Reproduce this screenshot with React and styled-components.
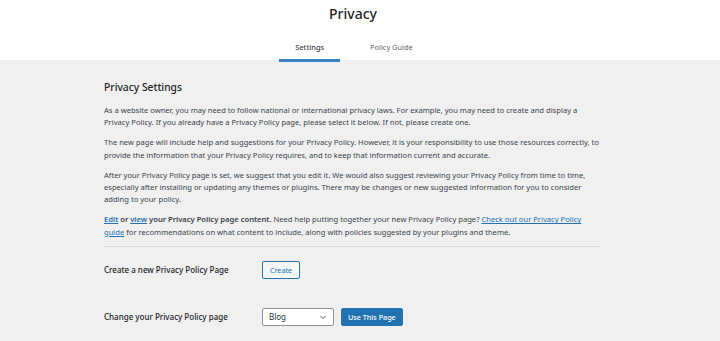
import styled, { createGlobalStyle } from "styled-components"

const GlobalStyle = createGlobalStyle`
  body {
    margin: 0;
    background: #f0f0f1;
    font-family: "Noto Sans", "Open Sans", sans-serif;
    color: #3c434a;
  }
`

const App = () => {
  return (
    <Page>
      <GlobalStyle />
      <Header>
        <Title>Privacy</Title>
        <Tabs>
          <Tab active>Settings</Tab>
          <Tab>Policy Guide</Tab>
        </Tabs>
      </Header>
      <Content>
        <Heading>Privacy Settings</Heading>
        <Para>
          As a website owner, you may need to follow national or international privacy laws. For example, you may
          need to create and display a Privacy Policy. If you already have a Privacy Policy page, please select it
          below. If not, please create one.
        </Para>
        <Para>
          The new page will include help and suggestions for your Privacy Policy. However, it is your responsibility
          to use those resources correctly, to provide the information that your Privacy Policy requires, and to keep
          that information current and accurate.
        </Para>
        <Para>
          After your Privacy Policy page is set, we suggest that you edit it. We would also suggest reviewing your
          Privacy Policy from time to time, especially after installing or updating any themes or plugins. There may
          be changes or new suggested information for you to consider adding to your policy.
        </Para>
        <Para>
          <Link href="#" bold>Edit</Link>
          <Strong> or </Strong>
          <Link href="#" bold>view</Link>
          <Strong> your Privacy Policy page content.</Strong> Need help putting together your new Privacy Policy
          page? <Link href="#">Check out our Privacy Policy guide</Link> for recommendations on what content to
          include, along with policies suggested by your plugins and theme.
        </Para>
        <Rule />
        <Row>
          <Label>Create a new Privacy Policy Page</Label>
          <Button>Create</Button>
        </Row>
        <Row>
          <Label>Change your Privacy Policy page</Label>
          <Select>
            <span>Blog</span>
            <svg width="8" height="8" viewBox="0 0 16 16" fill="none">
              <path d="M3 6l5 5 5-5" stroke="#50575e" strokeWidth="2" strokeLinecap="round" strokeLinejoin="round" />
            </svg>
          </Select>
          <Button primary>Use This Page</Button>
        </Row>
      </Content>
    </Page>
  )
}
export default App

//styling

const Page = styled.div`
  min-height: 341px;
`
const Header = styled.div`
  background: #fff;
  height: 60px;
  display: flex;
  flex-direction: column;
  align-items: center;
  padding-right: 14px;
  box-sizing: border-box;
`
const Title = styled.h1`
  margin: 4px 0 0;
  font-size: 14px;
  line-height: 20px;
  font-weight: 500;
  color: #1d2327;
`
const Tabs = styled.div`
  display: flex;
  gap: 14px;
  margin-top: 13px;
  padding-left: 2px;
`
const Tab = styled.div`
  padding: 0 16px 2px;
  height: 20px;
  display: flex;
  align-items: center;
  font-size: 7.4px;
  font-weight: ${p => (p.active ? 500 : 400)};
  color: ${p => (p.active ? "#3c434a" : "#646970")};
  border-bottom: 3px solid ${p => (p.active ? "#3582c4" : "transparent")};
`
const Content = styled.div`
  padding: 21px 0 0 104px;
  width: 496px;
`
const Heading = styled.h2`
  margin: 0 0 10px;
  font-size: 10.3px;
  line-height: 13px;
  font-weight: 500;
  color: #1d2327;
`
const Para = styled.p`
  margin: 0 0 7.5px;
  font-size: 7.6px;
  line-height: 12.4px;
`
const Strong = styled.span`
  font-weight: 600;
`
const Link = styled.a`
  color: #2271b1;
  text-decoration: underline;
  font-weight: ${p => (p.bold ? 600 : 400)};
`
const Rule = styled.div`
  height: 1px;
  background: #dcdcde;
  margin-top: 5px;
`
const Row = styled.div`
  display: flex;
  align-items: center;
  gap: 7px;
  margin-top: 14px;
  & + & {
    margin-top: 29px;
  }
`
const Label = styled.div`
  width: 151px;
  font-size: 8px;
  font-weight: 500;
  color: #1d2327;
`
const Button = styled.button`
  height: 18px;
  padding: 0 ${p => (p.primary ? 6 : 7)}px;
  border-radius: 2px;
  font-family: inherit;
  font-size: 7.2px;
  font-weight: ${p => (p.primary ? 500 : 400)};
  border: 1px solid #2271b1;
  background: ${p => (p.primary ? "#2271b1" : "#f6f7f7")};
  color: ${p => (p.primary ? "#fff" : "#2271b1")};
`
const Select = styled.div`
  width: 72px;
  height: 18px;
  box-sizing: border-box;
  padding: 0 6px;
  border: 1px solid #8c8f94;
  border-radius: 2px;
  background: #fff;
  display: flex;
  align-items: center;
  justify-content: space-between;
  font-size: 8px;
  color: #2c3338;
`
